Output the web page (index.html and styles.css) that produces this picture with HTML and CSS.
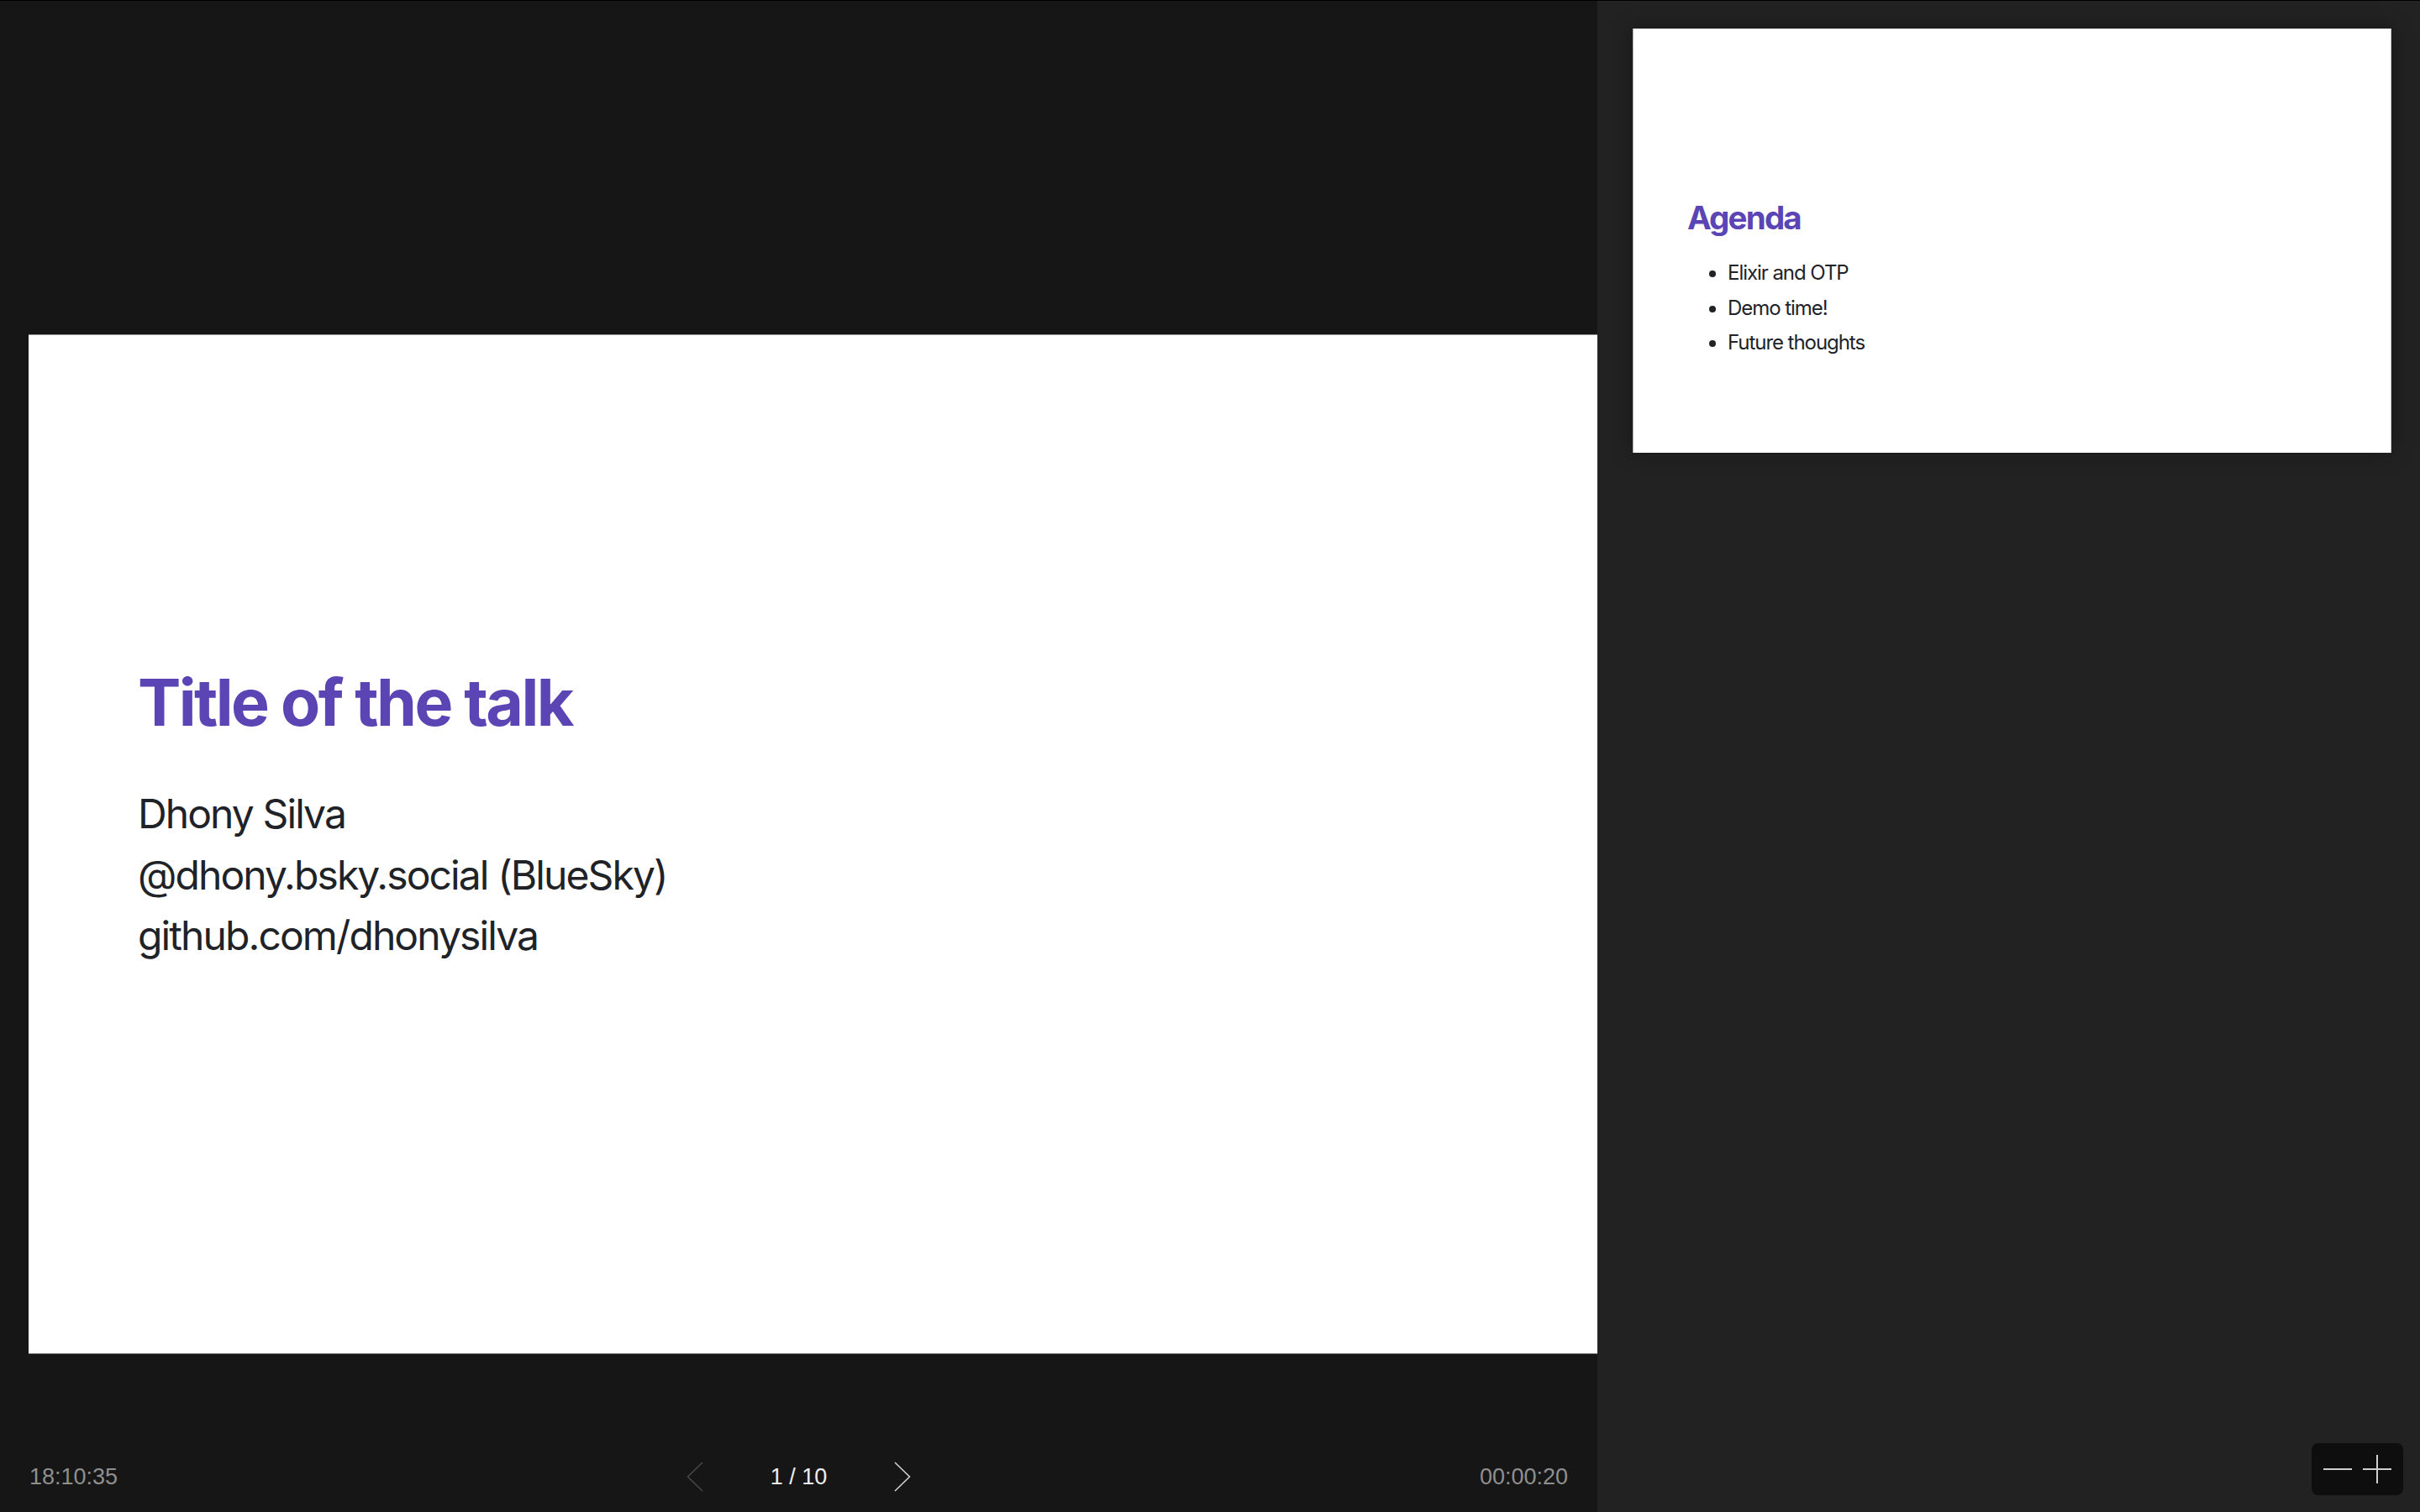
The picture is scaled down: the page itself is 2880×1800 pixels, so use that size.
FILE: index.html
```html
<!DOCTYPE html>
<html lang="en">
<head>
<meta charset="utf-8">
<title>Presenter view</title>
<link rel="stylesheet" href="styles.css">
</head>
<body>
<div class="app">
  <main class="stage">
    <section class="slide slide-current">
      <h1 class="slide-title">Title of the talk</h1>
      <p class="slide-line">Dhony Silva</p>
      <p class="slide-line">@dhony.bsky.social (BlueSky)</p>
      <p class="slide-line">github.com/dhonysilva</p>
    </section>
    <footer class="controls">
      <span class="clock">18:10:35</span>
      <div class="pager">
        <svg class="chev chev-prev" width="20" height="36" viewBox="0 0 20 36"><polyline points="19,1 1.5,18 19,35" fill="none" stroke="currentColor" stroke-width="1.6"/></svg>
        <span class="page">1 / 10</span>
        <svg class="chev chev-next" width="20" height="36" viewBox="0 0 20 36"><polyline points="1,1 18.5,18 1,35" fill="none" stroke="currentColor" stroke-width="1.6"/></svg>
      </div>
      <span class="clock timer">00:00:20</span>
    </footer>
  </main>
  <aside class="sidebar">
    <section class="preview">
      <h2 class="preview-title">Agenda</h2>
      <ul class="preview-list">
        <li>Elixir and OTP</li>
        <li>Demo time!</li>
        <li>Future thoughts</li>
      </ul>
    </section>
    <div class="zoom">
      <svg class="zoom-icon" width="34" height="34" viewBox="0 0 34 34"><line x1="0" y1="17" x2="34" y2="17" stroke="currentColor" stroke-width="2"/></svg>
      <svg class="zoom-icon" width="34" height="34" viewBox="0 0 34 34"><line x1="0" y1="17" x2="34" y2="17" stroke="currentColor" stroke-width="2"/><line x1="17" y1="0" x2="17" y2="34" stroke="currentColor" stroke-width="2"/></svg>
    </div>
  </aside>
</div>
</body>
</html>
```
FILE: styles.css
```css
* { box-sizing: border-box; }
html, body { margin: 0; padding: 0; }
body {
  width: 2880px;
  height: 1800px;
  overflow: hidden;
  background: #161616;
  font-family: "Liberation Sans", Arial, sans-serif;
}
.app {
  display: flex;
  width: 2880px;
  height: 1800px;
  border-top: 1px solid #000;
}
.stage {
  width: 1901px;
  flex: none;
  background: #161616;
  display: flex;
  flex-direction: column;
  padding-top: 397px;
}
.slide-current {
  margin-left: 34px;
  width: 1867px;
  height: 1214px;
  background: #fff;
  border-top: 1px solid #9a9a9a;
  border-bottom: 1px solid #7a7a7a;
  padding: 391px 0 0 130px;
  overflow: hidden;
  font-family: Inter, "Noto Sans", sans-serif;
  color: #1f2328;
}
.slide-title {
  margin: 0 0 51px;
  font-size: 77px;
  line-height: 92px;
  font-weight: 700;
  color: #5b45b5;
  letter-spacing: -2.6px;
}
.slide-line {
  margin: 0;
  font-size: 48px;
  line-height: 72.5px;
  font-weight: 400;
  letter-spacing: -1.9px;
}
.controls {
  margin-top: auto;
  height: 84px;
  display: flex;
  align-items: center;
  justify-content: space-between;
  padding: 0 35px;
  font-size: 27px;
}
.clock {
  color: #8f8f8f;
  width: 110px;
}
.timer { text-align: right; }
.pager {
  display: flex;
  align-items: center;
  gap: 80px;
}
.page { color: #eeeeee; }
.chev { display: block; }
.chev-prev { color: #474747; }
.chev-next { color: #cfcfcf; }
.sidebar {
  flex: 1;
  background: #222222;
  position: relative;
  padding: 33px 34px 0 42px;
}
.preview {
  width: 903px;
  height: 505px;
  background: #fff;
  border-left: 1px solid #b5b5b5;
  border-right: 1px solid #c8c8c8;
  box-shadow: 0 0 24px rgba(0, 0, 0, 0.35);
  padding: 202px 0 0 64px;
  font-family: Inter, "Noto Sans", sans-serif;
  color: #1f2328;
}
.preview-title {
  margin: 0;
  font-size: 38.5px;
  line-height: 46px;
  font-weight: 700;
  color: #5b45b5;
  letter-spacing: -1.8px;
}
.preview-list {
  margin: 22px 0 0;
  padding-left: 48px;
  font-size: 24px;
  line-height: 41.5px;
  letter-spacing: -1.05px;
}
.zoom {
  position: absolute;
  right: 20px;
  bottom: 20px;
  width: 109px;
  height: 62px;
  background: #0e0e0e;
  border-radius: 8px;
  display: flex;
  align-items: center;
  gap: 13px;
  padding: 0 13px 0 14px;
  color: #cfcfcf;
}
.zoom-icon { display: block; }
```
